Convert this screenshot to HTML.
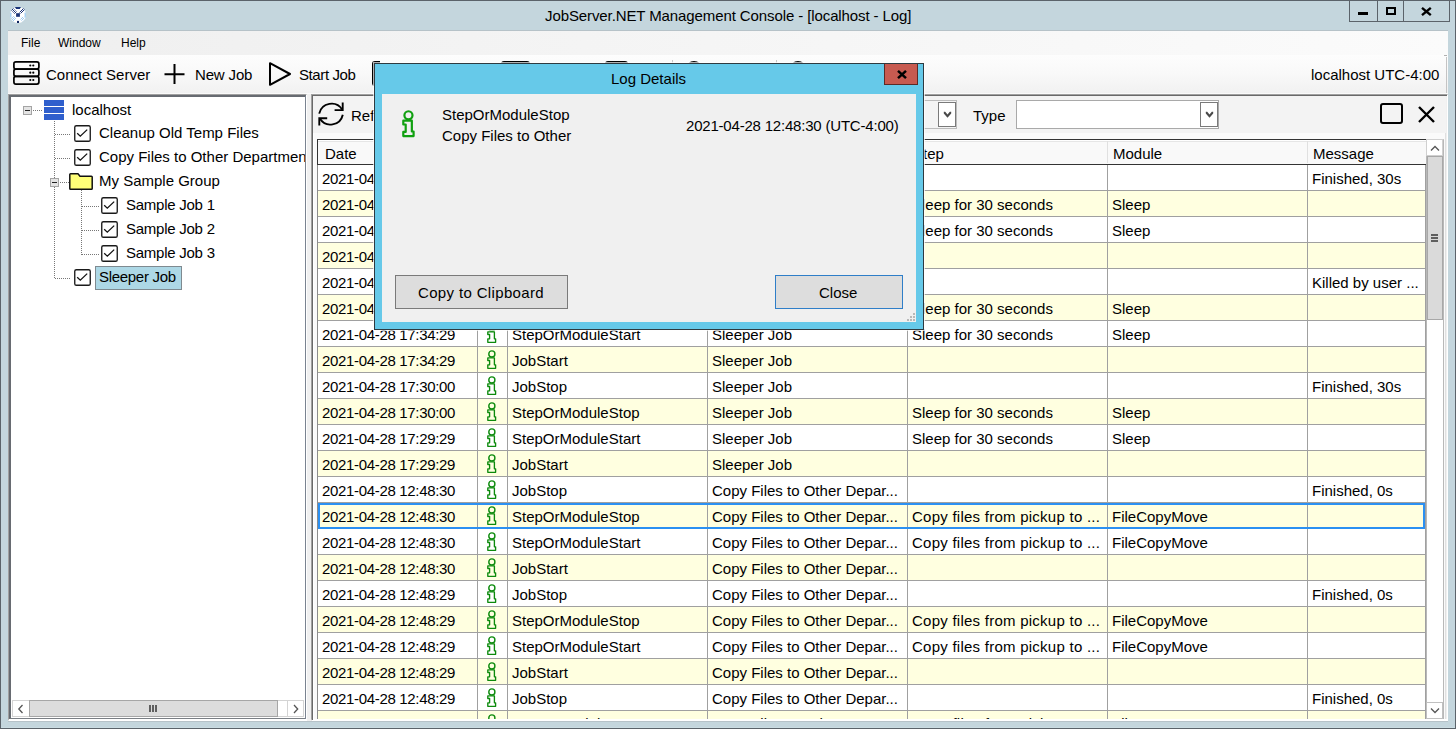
<!DOCTYPE html><html><head><meta charset="utf-8"><style>
*{box-sizing:border-box;margin:0;padding:0}
html,body{width:1456px;height:729px;overflow:hidden}
body{position:relative;background:#c4d6dd;font-family:"Liberation Sans",sans-serif;font-size:15px;color:#000}
.a{position:absolute}
.t{position:absolute;white-space:nowrap;line-height:20px;color:#000}
.d{letter-spacing:-0.33px}
svg{position:absolute;overflow:visible}
</style></head><body>
<div class="a" style="left:0;top:0;width:1456px;height:729px;border:1px solid #5b636a"></div>
<div class="a" style="left:1px;top:727px;width:1454px;height:1px;background:#cadce2"></div>
<div class="a" style="left:8px;top:721px;width:1440px;height:1px;background:#b6c2c8"></div>
<svg style="left:9px;top:6px" width="18" height="18" viewBox="0 0 18 18">
<defs><pattern id="ck" width="2" height="2" patternUnits="userSpaceOnUse"><rect x="0" y="0" width="1" height="1" fill="#1a3478"/><rect x="1" y="1" width="1" height="1" fill="#1a3478"/></pattern>
<pattern id="ckl" width="2" height="2" patternUnits="userSpaceOnUse"><rect x="0" y="0" width="1" height="1" fill="#9cc8ee"/><rect x="1" y="1" width="1" height="1" fill="#9cc8ee"/></pattern></defs>
<circle cx="9" cy="9" r="8.1" fill="#fff"/>
<path d="M1.2 6.5Q0.6 9 1.2 11.8L2.6 11.5Q2.2 9 2.6 6.8Z M16.8 6.5Q17.4 9 16.8 11.8L15.4 11.5Q15.8 9 15.4 6.8Z" fill="#a6d0f2"/>
<path d="M5.9 1H12L10.8 2.9H7.1Z" fill="#1a3478"/>
<path d="M2 4L4 1.9L8 5.9L5.9 7.9Z M16 4L14 1.9L10 5.9L12.1 7.9Z" fill="url(#ck)"/>
<path d="M2 12.5L4.5 10L7.2 12.7L4.6 15.4Z M16 12.5L13.5 10L10.8 12.7L13.4 15.4Z" fill="url(#ckl)"/>
<rect x="7.1" y="7.2" width="3.8" height="3.6" fill="#1a3478"/>
<rect x="8" y="14.9" width="2" height="2.1" fill="#0d2560"/>
</svg>
<div class="t" style="left:545px;top:6px;font-size:15px;letter-spacing:-0.1px">JobServer.NET Management Console - [localhost - Log]</div>
<div class="a" style="left:1349px;top:0;width:101px;height:22px;border:1px solid #5b636a;border-top:none"></div>
<div class="a" style="left:1377px;top:0;width:1px;height:22px;background:#5b636a"></div>
<div class="a" style="left:1403px;top:0;width:1px;height:22px;background:#5b636a"></div>
<div class="a" style="left:1358px;top:12px;width:10px;height:3px;background:#000"></div>
<div class="a" style="left:1386px;top:7px;width:10px;height:8px;border:2px solid #000;border-top-width:2px"></div>
<svg style="left:1421px;top:7px" width="11" height="9" viewBox="0 0 11 9"><path d="M1 0.8L9.8 8.2M9.8 0.8L1 8.2" stroke="#000" stroke-width="2.4"/></svg>
<div class="a" style="left:8px;top:30px;width:1440px;height:25px;background:linear-gradient(90deg,#efefef,#f4f4f4 40%,#fbfbfb);border-top:1px solid #b6c2c8"></div>
<div class="t" style="left:21px;top:33px;font-size:12px;">File</div>
<div class="t" style="left:58px;top:33px;font-size:12px;">Window</div>
<div class="t" style="left:121px;top:33px;font-size:12px;">Help</div>
<div class="a" style="left:8px;top:55px;width:1440px;height:39px;background:linear-gradient(#fdfdfd,#f9f9f9 45%,#f1f1f1)"></div>
<svg style="left:13px;top:61px" width="27" height="25" viewBox="0 0 27 25" fill="none" stroke="#000" stroke-width="1.7">
<rect x="0.9" y="0.9" width="25" height="7.2" rx="2"/><rect x="0.9" y="8.1" width="25" height="7.2" rx="2"/><rect x="0.9" y="15.3" width="25" height="7.8" rx="2"/>
<g fill="#000" stroke="none"><circle cx="17.3" cy="4.5" r="1.1"/><circle cx="20.3" cy="4.5" r="1.1"/><circle cx="17.3" cy="11.7" r="1.1"/><circle cx="20.3" cy="11.7" r="1.1"/><circle cx="17.3" cy="19" r="1.1"/><circle cx="20.3" cy="19" r="1.1"/></g>
</svg>
<div class="t" style="left:46px;top:65px;font-size:15px;">Connect Server</div>
<svg style="left:164px;top:64px" width="21" height="21" viewBox="0 0 21 21"><path d="M10.5 0v20M0.5 10.2h20" stroke="#000" stroke-width="2"/></svg>
<div class="t" style="left:195px;top:65px;font-size:15px;letter-spacing:-0.15px">New Job</div>
<svg style="left:268px;top:61px" width="24" height="26" viewBox="0 0 24 26"><path d="M2 2.2L22 13L2 23.8Z" fill="none" stroke="#000" stroke-width="2" stroke-linejoin="round"/></svg>
<div class="t" style="left:299px;top:65px;font-size:15px;letter-spacing:-0.4px">Start Job</div>
<div class="a" style="left:372px;top:61px;width:8px;height:25px;border:2px solid #000;border-right:none;border-radius:3px 0 0 3px"></div>
<div class="a" style="left:501px;top:61px;width:29px;height:25px;border:2px solid #000;border-radius:3px"></div>
<div class="a" style="left:605px;top:61px;width:23px;height:25px;border:2px solid #000;border-radius:3px"></div>
<div class="a" style="left:672px;top:60px;width:1px;height:30px;background:#c8c8c8"></div>
<div class="a" style="left:686px;top:61px;width:16px;height:16px;border:2px solid #000;border-radius:50%"></div>
<div class="a" style="left:776px;top:60px;width:1px;height:30px;background:#c8c8c8"></div>
<div class="a" style="left:790px;top:61px;width:16px;height:16px;border:2px solid #000;border-radius:50%"></div>
<div class="t" style="left:1311px;top:65px;font-size:15px;">localhost UTC-4:00</div>
<div class="a" style="left:1446px;top:57px;width:1px;height:36px;background:#c4c4c4"></div>
<div class="a" style="left:1444px;top:55px;width:3px;height:1px;background:#b0b0b0"></div>
<div class="a" style="left:8px;top:93px;width:1440px;height:628px;background:#f0f0f0;border-top:1px solid #fafafa"></div>
<div class="a" style="left:8px;top:94px;width:299px;height:627px;border-top:1px solid #a0a0a0;border-left:1px solid #a0a0a0;border-right:1px solid #fff;border-bottom:2px solid #fff"></div>
<div class="a" style="left:9px;top:95px;width:297px;height:624px;background:#fff;border:2px solid #676b71;border-right:1px solid #7a8390;border-bottom:1px solid #7a7f85"></div>
<div class="a" style="left:23px;top:106px;width:9px;height:9px;background:#e4e4e4;border:1px solid #a4a4a4"></div>
<div class="a" style="left:25px;top:110px;width:5px;height:1px;background:#222"></div>
<div class="a" style="left:33px;top:110px;width:10px;height:1px;background:repeating-linear-gradient(90deg,#777 0 1px,transparent 1px 2px)"></div>
<div class="a" style="left:44px;top:100px;width:20px;height:6px;background:#2f5fcd"></div>
<div class="a" style="left:44px;top:107px;width:20px;height:6px;background:#2f5fcd"></div>
<div class="a" style="left:44px;top:114px;width:20px;height:6px;background:#2f5fcd"></div>
<div class="t" style="left:72px;top:100px;font-size:15px;">localhost</div>
<div class="a" style="left:54px;top:121px;width:1px;height:158px;background:repeating-linear-gradient(180deg,#777 0 1px,transparent 1px 2px)"></div>
<div class="a" style="left:55px;top:134px;width:15px;height:1px;background:repeating-linear-gradient(90deg,#777 0 1px,transparent 1px 2px)"></div>
<svg style="left:74px;top:125px" width="17" height="17" viewBox="0 0 17 17"><rect x="0.75" y="0.75" width="15.5" height="15.5" rx="1.6" fill="#fff" stroke="#1a1a1a" stroke-width="1.35"/><path d="M3.2 8.2L6.3 11.2L13.2 4.6" fill="none" stroke="#111" stroke-width="1.3"/></svg>
<div class="t" style="left:99px;top:123px;font-size:15px;">Cleanup Old Temp Files</div>
<div class="a" style="left:55px;top:158px;width:15px;height:1px;background:repeating-linear-gradient(90deg,#777 0 1px,transparent 1px 2px)"></div>
<svg style="left:74px;top:149px" width="17" height="17" viewBox="0 0 17 17"><rect x="0.75" y="0.75" width="15.5" height="15.5" rx="1.6" fill="#fff" stroke="#1a1a1a" stroke-width="1.35"/><path d="M3.2 8.2L6.3 11.2L13.2 4.6" fill="none" stroke="#111" stroke-width="1.3"/></svg>
<div class="t" style="left:99px;top:147px;font-size:15px;width:206px;overflow:hidden">Copy Files to Other Departments</div>
<div class="a" style="left:50px;top:178px;width:9px;height:9px;background:#e4e4e4;border:1px solid #a4a4a4"></div>
<div class="a" style="left:52px;top:182px;width:5px;height:1px;background:#222"></div>
<div class="a" style="left:60px;top:182px;width:10px;height:1px;background:repeating-linear-gradient(90deg,#777 0 1px,transparent 1px 2px)"></div>
<svg style="left:69px;top:173px" width="24" height="17" viewBox="0 0 24 17"><path d="M0.8 1.6Q0.8 0.8 1.6 0.8H9L11 3.2H22.4Q23.2 3.2 23.2 4V15.4Q23.2 16.2 22.4 16.2H1.6Q0.8 16.2 0.8 15.4Z" fill="#ffff78" stroke="#111" stroke-width="1.5" stroke-linejoin="round"/></svg>
<div class="t" style="left:99px;top:171px;font-size:15px;">My Sample Group</div>
<div class="a" style="left:81px;top:190px;width:1px;height:65px;background:repeating-linear-gradient(180deg,#777 0 1px,transparent 1px 2px)"></div>
<div class="a" style="left:82px;top:206px;width:18px;height:1px;background:repeating-linear-gradient(90deg,#777 0 1px,transparent 1px 2px)"></div>
<svg style="left:101px;top:197px" width="17" height="17" viewBox="0 0 17 17"><rect x="0.75" y="0.75" width="15.5" height="15.5" rx="1.6" fill="#fff" stroke="#1a1a1a" stroke-width="1.35"/><path d="M3.2 8.2L6.3 11.2L13.2 4.6" fill="none" stroke="#111" stroke-width="1.3"/></svg>
<div class="t" style="left:126px;top:195px;font-size:15px;letter-spacing:-0.25px">Sample Job 1</div>
<div class="a" style="left:82px;top:230px;width:18px;height:1px;background:repeating-linear-gradient(90deg,#777 0 1px,transparent 1px 2px)"></div>
<svg style="left:101px;top:221px" width="17" height="17" viewBox="0 0 17 17"><rect x="0.75" y="0.75" width="15.5" height="15.5" rx="1.6" fill="#fff" stroke="#1a1a1a" stroke-width="1.35"/><path d="M3.2 8.2L6.3 11.2L13.2 4.6" fill="none" stroke="#111" stroke-width="1.3"/></svg>
<div class="t" style="left:126px;top:219px;font-size:15px;letter-spacing:-0.25px">Sample Job 2</div>
<div class="a" style="left:82px;top:254px;width:18px;height:1px;background:repeating-linear-gradient(90deg,#777 0 1px,transparent 1px 2px)"></div>
<svg style="left:101px;top:245px" width="17" height="17" viewBox="0 0 17 17"><rect x="0.75" y="0.75" width="15.5" height="15.5" rx="1.6" fill="#fff" stroke="#1a1a1a" stroke-width="1.35"/><path d="M3.2 8.2L6.3 11.2L13.2 4.6" fill="none" stroke="#111" stroke-width="1.3"/></svg>
<div class="t" style="left:126px;top:243px;font-size:15px;letter-spacing:-0.25px">Sample Job 3</div>
<div class="a" style="left:55px;top:278px;width:15px;height:1px;background:repeating-linear-gradient(90deg,#777 0 1px,transparent 1px 2px)"></div>
<svg style="left:74px;top:269px" width="17" height="17" viewBox="0 0 17 17"><rect x="0.75" y="0.75" width="15.5" height="15.5" rx="1.6" fill="#fff" stroke="#1a1a1a" stroke-width="1.35"/><path d="M3.2 8.2L6.3 11.2L13.2 4.6" fill="none" stroke="#111" stroke-width="1.3"/></svg>
<div class="a" style="left:95px;top:266px;width:87px;height:24px;background:#add8e6;border:1px solid #7f8a90"></div>
<div class="t" style="left:99px;top:267px;font-size:15px;letter-spacing:-0.3px">Sleeper Job</div>
<div class="a" style="left:305px;top:96px;width:1px;height:623px;background:#7a8390"></div>
<div class="a" style="left:12px;top:700px;width:292px;height:17px;background:#fff;border:1px solid #d4d4d4"></div>
<div class="a" style="left:29px;top:700px;width:249px;height:17px;background:#dcdcdc;border:1px solid #a6a6a6"></div>
<div class="a" style="left:287px;top:700px;width:17px;height:17px;background:#fff;border:1px solid #d4d4d4"></div>
<svg style="left:17px;top:704px" width="8" height="10" viewBox="0 0 8 10"><path d="M5.5 1L1.8 5L5.5 9" fill="none" stroke="#555" stroke-width="1.3"/></svg>
<svg style="left:292px;top:704px" width="8" height="10" viewBox="0 0 8 10"><path d="M2 1L5.7 5L2 9" fill="none" stroke="#555" stroke-width="1.3"/></svg>
<div class="a" style="left:149px;top:705px;width:2px;height:7px;background:#5f5f5f"></div>
<div class="a" style="left:152px;top:705px;width:2px;height:7px;background:#5f5f5f"></div>
<div class="a" style="left:155px;top:705px;width:2px;height:7px;background:#5f5f5f"></div>
<div class="a" style="left:311px;top:94px;width:1137px;height:627px;border-top:1px solid #a0a0a0;border-left:1px solid #a0a0a0;border-right:1px solid #fff;border-bottom:2px solid #fff"></div>
<div class="a" style="left:312px;top:95px;width:1135px;height:625px;border-top:1px solid #696969;border-left:1px solid #696969"></div>
<div class="a" style="left:313px;top:96px;width:1133px;height:623px;background:#fafafa;border-left:1px solid #fff;border-top:1px solid #fff;border-right:1px solid #e0e0e0"></div>
<div class="a" style="left:313px;top:96px;width:1133px;height:37px;background:#f3f3f3"></div>
<svg style="left:314px;top:98px" width="34" height="32" viewBox="0 0 34 32" fill="none" stroke="#000" stroke-width="1.9">
<path d="M5.2 15.6A12.6 12.6 0 0 1 28.2 11.6"/><path d="M28.7 4.4V12.1H20.6"/>
<path d="M28.8 16.7A12.6 12.6 0 0 1 5.8 20.6"/><path d="M5.3 27.6V20.2H13.2"/></svg>
<div class="t" style="left:351px;top:106px;font-size:15px;">Refresh</div>
<div class="a" style="left:840px;top:100px;width:117px;height:29px;background:#f4f4f4;border:1px solid #bcbcbc"></div>
<div class="a" style="left:938px;top:102px;width:18px;height:25px;background:#fff;border:1px solid #7a7a7a"></div>
<svg style="left:943px;top:111px" width="9" height="7" viewBox="0 0 9 7"><path d="M0.8 0.8H2.2L4.5 3.6L6.8 0.8H8.2V2.4L4.5 6.8L0.8 2.4Z" fill="#4a4a4a"/></svg>
<div class="t" style="left:973px;top:106px;font-size:15px;">Type</div>
<div class="a" style="left:1016px;top:100px;width:203px;height:29px;background:#fff;border:1px solid #a9a9a9"></div>
<div class="a" style="left:1200px;top:102px;width:18px;height:25px;background:#fff;border:1px solid #7a7a7a"></div>
<svg style="left:1205px;top:111px" width="9" height="7" viewBox="0 0 9 7"><path d="M0.8 0.8H2.2L4.5 3.6L6.8 0.8H8.2V2.4L4.5 6.8L0.8 2.4Z" fill="#4a4a4a"/></svg>
<div class="a" style="left:1380px;top:103px;width:23px;height:21px;border:2px solid #000;border-radius:3px"></div>
<svg style="left:1418px;top:106px" width="17" height="17" viewBox="0 0 17 17"><path d="M1 1L16 16M16 1L1 16" stroke="#000" stroke-width="2.4"/></svg>
<div class="a" style="left:317px;top:139px;width:1109px;height:580px;background:#fff;border-left:1px solid #8c8c8c"></div>
<div class="a" style="left:317px;top:139px;width:1109px;height:26px;background:#f9f9f9;border:1px solid #333;border-width:1px 0 1px 1px"></div>
<div class="a" style="left:318px;top:140px;width:1108px;height:1px;background:#fff"></div>
<div class="a" style="left:318px;top:141px;width:1108px;height:1px;background:#e6e6e6"></div>
<div class="a" style="left:707px;top:141px;width:1px;height:22px;background:#e0e0e0"></div>
<div class="a" style="left:907px;top:141px;width:1px;height:22px;background:#e0e0e0"></div>
<div class="a" style="left:1107px;top:141px;width:1px;height:22px;background:#e0e0e0"></div>
<div class="a" style="left:1307px;top:141px;width:1px;height:22px;background:#e0e0e0"></div>
<div class="t" style="left:325px;top:144px;font-size:15px;">Date</div>
<div class="t" style="left:513px;top:144px;font-size:15px;">Type</div>
<div class="t" style="left:713px;top:144px;font-size:15px;">Job</div>
<div class="t" style="left:913px;top:144px;font-size:15px;">Step</div>
<div class="t" style="left:1113px;top:144px;font-size:15px;">Module</div>
<div class="t" style="left:1313px;top:144px;font-size:15px;">Message</div>
<div class="a" style="left:318px;top:165px;width:1108px;height:554px;overflow:hidden">
<div class="a" style="left:0;top:0px;width:1107px;height:26px;background:#fff;border-bottom:1px solid #a0a0a0"></div>
<div class="a" style="left:159px;top:0px;width:1px;height:26px;background:#a0a0a0"></div>
<div class="a" style="left:189px;top:0px;width:1px;height:26px;background:#a0a0a0"></div>
<div class="a" style="left:389px;top:0px;width:1px;height:26px;background:#a0a0a0"></div>
<div class="a" style="left:589px;top:0px;width:1px;height:26px;background:#a0a0a0"></div>
<div class="a" style="left:789px;top:0px;width:1px;height:26px;background:#a0a0a0"></div>
<div class="a" style="left:989px;top:0px;width:1px;height:26px;background:#a0a0a0"></div>
<div class="a" style="left:1107px;top:0px;width:1px;height:26px;background:#a0a0a0"></div>
<div class="t" style="left:4px;top:4px;letter-spacing:-0.33px">2021-04-28 17:35:00</div>
<svg style="left:169px;top:4px" width="12" height="21" viewBox="0 0 12 21"><circle cx="4.85" cy="2.95" r="3.05" fill="none" stroke="#0c8a0c" stroke-width="1.4"/><path d="M0.8 6.9H7.4V13.8H8.6V17.3H0.8V13.8H2.6V9.5H0.8Z" fill="none" stroke="#0c8a0c" stroke-width="1.35" stroke-linejoin="round"/></svg>
<div class="t" style="left:194px;top:4px;">JobStop</div>
<div class="t" style="left:394px;top:4px;">Sleeper Job</div>
<div class="t" style="left:594px;top:4px;"></div>
<div class="t" style="left:794px;top:4px;"></div>
<div class="t" style="left:994px;top:4px;">Finished, 30s</div>
<div class="a" style="left:0;top:26px;width:1107px;height:26px;background:#ffffe0;border-bottom:1px solid #a0a0a0"></div>
<div class="a" style="left:159px;top:26px;width:1px;height:26px;background:#a0a0a0"></div>
<div class="a" style="left:189px;top:26px;width:1px;height:26px;background:#a0a0a0"></div>
<div class="a" style="left:389px;top:26px;width:1px;height:26px;background:#a0a0a0"></div>
<div class="a" style="left:589px;top:26px;width:1px;height:26px;background:#a0a0a0"></div>
<div class="a" style="left:789px;top:26px;width:1px;height:26px;background:#a0a0a0"></div>
<div class="a" style="left:989px;top:26px;width:1px;height:26px;background:#a0a0a0"></div>
<div class="a" style="left:1107px;top:26px;width:1px;height:26px;background:#a0a0a0"></div>
<div class="t" style="left:4px;top:30px;letter-spacing:-0.33px">2021-04-28 17:35:00</div>
<svg style="left:169px;top:30px" width="12" height="21" viewBox="0 0 12 21"><circle cx="4.85" cy="2.95" r="3.05" fill="none" stroke="#0c8a0c" stroke-width="1.4"/><path d="M0.8 6.9H7.4V13.8H8.6V17.3H0.8V13.8H2.6V9.5H0.8Z" fill="none" stroke="#0c8a0c" stroke-width="1.35" stroke-linejoin="round"/></svg>
<div class="t" style="left:194px;top:30px;">StepOrModuleStop</div>
<div class="t" style="left:394px;top:30px;">Sleeper Job</div>
<div class="t" style="left:594px;top:30px;">Sleep for 30 seconds</div>
<div class="t" style="left:794px;top:30px;">Sleep</div>
<div class="t" style="left:994px;top:30px;"></div>
<div class="a" style="left:0;top:52px;width:1107px;height:26px;background:#fff;border-bottom:1px solid #a0a0a0"></div>
<div class="a" style="left:159px;top:52px;width:1px;height:26px;background:#a0a0a0"></div>
<div class="a" style="left:189px;top:52px;width:1px;height:26px;background:#a0a0a0"></div>
<div class="a" style="left:389px;top:52px;width:1px;height:26px;background:#a0a0a0"></div>
<div class="a" style="left:589px;top:52px;width:1px;height:26px;background:#a0a0a0"></div>
<div class="a" style="left:789px;top:52px;width:1px;height:26px;background:#a0a0a0"></div>
<div class="a" style="left:989px;top:52px;width:1px;height:26px;background:#a0a0a0"></div>
<div class="a" style="left:1107px;top:52px;width:1px;height:26px;background:#a0a0a0"></div>
<div class="t" style="left:4px;top:56px;letter-spacing:-0.33px">2021-04-28 17:34:30</div>
<svg style="left:169px;top:56px" width="12" height="21" viewBox="0 0 12 21"><circle cx="4.85" cy="2.95" r="3.05" fill="none" stroke="#0c8a0c" stroke-width="1.4"/><path d="M0.8 6.9H7.4V13.8H8.6V17.3H0.8V13.8H2.6V9.5H0.8Z" fill="none" stroke="#0c8a0c" stroke-width="1.35" stroke-linejoin="round"/></svg>
<div class="t" style="left:194px;top:56px;">StepOrModuleStart</div>
<div class="t" style="left:394px;top:56px;">Sleeper Job</div>
<div class="t" style="left:594px;top:56px;">Sleep for 30 seconds</div>
<div class="t" style="left:794px;top:56px;">Sleep</div>
<div class="t" style="left:994px;top:56px;"></div>
<div class="a" style="left:0;top:78px;width:1107px;height:26px;background:#ffffe0;border-bottom:1px solid #a0a0a0"></div>
<div class="a" style="left:159px;top:78px;width:1px;height:26px;background:#a0a0a0"></div>
<div class="a" style="left:189px;top:78px;width:1px;height:26px;background:#a0a0a0"></div>
<div class="a" style="left:389px;top:78px;width:1px;height:26px;background:#a0a0a0"></div>
<div class="a" style="left:589px;top:78px;width:1px;height:26px;background:#a0a0a0"></div>
<div class="a" style="left:789px;top:78px;width:1px;height:26px;background:#a0a0a0"></div>
<div class="a" style="left:989px;top:78px;width:1px;height:26px;background:#a0a0a0"></div>
<div class="a" style="left:1107px;top:78px;width:1px;height:26px;background:#a0a0a0"></div>
<div class="t" style="left:4px;top:82px;letter-spacing:-0.33px">2021-04-28 17:34:30</div>
<svg style="left:169px;top:82px" width="12" height="21" viewBox="0 0 12 21"><circle cx="4.85" cy="2.95" r="3.05" fill="none" stroke="#0c8a0c" stroke-width="1.4"/><path d="M0.8 6.9H7.4V13.8H8.6V17.3H0.8V13.8H2.6V9.5H0.8Z" fill="none" stroke="#0c8a0c" stroke-width="1.35" stroke-linejoin="round"/></svg>
<div class="t" style="left:194px;top:82px;">JobStart</div>
<div class="t" style="left:394px;top:82px;">Sleeper Job</div>
<div class="t" style="left:594px;top:82px;"></div>
<div class="t" style="left:794px;top:82px;"></div>
<div class="t" style="left:994px;top:82px;"></div>
<div class="a" style="left:0;top:104px;width:1107px;height:26px;background:#fff;border-bottom:1px solid #a0a0a0"></div>
<div class="a" style="left:159px;top:104px;width:1px;height:26px;background:#a0a0a0"></div>
<div class="a" style="left:189px;top:104px;width:1px;height:26px;background:#a0a0a0"></div>
<div class="a" style="left:389px;top:104px;width:1px;height:26px;background:#a0a0a0"></div>
<div class="a" style="left:589px;top:104px;width:1px;height:26px;background:#a0a0a0"></div>
<div class="a" style="left:789px;top:104px;width:1px;height:26px;background:#a0a0a0"></div>
<div class="a" style="left:989px;top:104px;width:1px;height:26px;background:#a0a0a0"></div>
<div class="a" style="left:1107px;top:104px;width:1px;height:26px;background:#a0a0a0"></div>
<div class="t" style="left:4px;top:108px;letter-spacing:-0.33px">2021-04-28 17:34:29</div>
<svg style="left:169px;top:108px" width="12" height="21" viewBox="0 0 12 21"><circle cx="4.85" cy="2.95" r="3.05" fill="none" stroke="#0c8a0c" stroke-width="1.4"/><path d="M0.8 6.9H7.4V13.8H8.6V17.3H0.8V13.8H2.6V9.5H0.8Z" fill="none" stroke="#0c8a0c" stroke-width="1.35" stroke-linejoin="round"/></svg>
<div class="t" style="left:194px;top:108px;">JobStop</div>
<div class="t" style="left:394px;top:108px;">Sleeper Job</div>
<div class="t" style="left:594px;top:108px;"></div>
<div class="t" style="left:794px;top:108px;"></div>
<div class="t" style="left:994px;top:108px;">Killed by user ...</div>
<div class="a" style="left:0;top:130px;width:1107px;height:26px;background:#ffffe0;border-bottom:1px solid #a0a0a0"></div>
<div class="a" style="left:159px;top:130px;width:1px;height:26px;background:#a0a0a0"></div>
<div class="a" style="left:189px;top:130px;width:1px;height:26px;background:#a0a0a0"></div>
<div class="a" style="left:389px;top:130px;width:1px;height:26px;background:#a0a0a0"></div>
<div class="a" style="left:589px;top:130px;width:1px;height:26px;background:#a0a0a0"></div>
<div class="a" style="left:789px;top:130px;width:1px;height:26px;background:#a0a0a0"></div>
<div class="a" style="left:989px;top:130px;width:1px;height:26px;background:#a0a0a0"></div>
<div class="a" style="left:1107px;top:130px;width:1px;height:26px;background:#a0a0a0"></div>
<div class="t" style="left:4px;top:134px;letter-spacing:-0.33px">2021-04-28 17:34:29</div>
<svg style="left:169px;top:134px" width="12" height="21" viewBox="0 0 12 21"><circle cx="4.85" cy="2.95" r="3.05" fill="none" stroke="#0c8a0c" stroke-width="1.4"/><path d="M0.8 6.9H7.4V13.8H8.6V17.3H0.8V13.8H2.6V9.5H0.8Z" fill="none" stroke="#0c8a0c" stroke-width="1.35" stroke-linejoin="round"/></svg>
<div class="t" style="left:194px;top:134px;">StepOrModuleStop</div>
<div class="t" style="left:394px;top:134px;">Sleeper Job</div>
<div class="t" style="left:594px;top:134px;">Sleep for 30 seconds</div>
<div class="t" style="left:794px;top:134px;">Sleep</div>
<div class="t" style="left:994px;top:134px;"></div>
<div class="a" style="left:0;top:156px;width:1107px;height:26px;background:#fff;border-bottom:1px solid #a0a0a0"></div>
<div class="a" style="left:159px;top:156px;width:1px;height:26px;background:#a0a0a0"></div>
<div class="a" style="left:189px;top:156px;width:1px;height:26px;background:#a0a0a0"></div>
<div class="a" style="left:389px;top:156px;width:1px;height:26px;background:#a0a0a0"></div>
<div class="a" style="left:589px;top:156px;width:1px;height:26px;background:#a0a0a0"></div>
<div class="a" style="left:789px;top:156px;width:1px;height:26px;background:#a0a0a0"></div>
<div class="a" style="left:989px;top:156px;width:1px;height:26px;background:#a0a0a0"></div>
<div class="a" style="left:1107px;top:156px;width:1px;height:26px;background:#a0a0a0"></div>
<div class="t" style="left:4px;top:160px;letter-spacing:-0.33px">2021-04-28 17:34:29</div>
<svg style="left:169px;top:160px" width="12" height="21" viewBox="0 0 12 21"><circle cx="4.85" cy="2.95" r="3.05" fill="none" stroke="#0c8a0c" stroke-width="1.4"/><path d="M0.8 6.9H7.4V13.8H8.6V17.3H0.8V13.8H2.6V9.5H0.8Z" fill="none" stroke="#0c8a0c" stroke-width="1.35" stroke-linejoin="round"/></svg>
<div class="t" style="left:194px;top:160px;">StepOrModuleStart</div>
<div class="t" style="left:394px;top:160px;">Sleeper Job</div>
<div class="t" style="left:594px;top:160px;">Sleep for 30 seconds</div>
<div class="t" style="left:794px;top:160px;">Sleep</div>
<div class="t" style="left:994px;top:160px;"></div>
<div class="a" style="left:0;top:182px;width:1107px;height:26px;background:#ffffe0;border-bottom:1px solid #a0a0a0"></div>
<div class="a" style="left:159px;top:182px;width:1px;height:26px;background:#a0a0a0"></div>
<div class="a" style="left:189px;top:182px;width:1px;height:26px;background:#a0a0a0"></div>
<div class="a" style="left:389px;top:182px;width:1px;height:26px;background:#a0a0a0"></div>
<div class="a" style="left:589px;top:182px;width:1px;height:26px;background:#a0a0a0"></div>
<div class="a" style="left:789px;top:182px;width:1px;height:26px;background:#a0a0a0"></div>
<div class="a" style="left:989px;top:182px;width:1px;height:26px;background:#a0a0a0"></div>
<div class="a" style="left:1107px;top:182px;width:1px;height:26px;background:#a0a0a0"></div>
<div class="t" style="left:4px;top:186px;letter-spacing:-0.33px">2021-04-28 17:34:29</div>
<svg style="left:169px;top:186px" width="12" height="21" viewBox="0 0 12 21"><circle cx="4.85" cy="2.95" r="3.05" fill="none" stroke="#0c8a0c" stroke-width="1.4"/><path d="M0.8 6.9H7.4V13.8H8.6V17.3H0.8V13.8H2.6V9.5H0.8Z" fill="none" stroke="#0c8a0c" stroke-width="1.35" stroke-linejoin="round"/></svg>
<div class="t" style="left:194px;top:186px;">JobStart</div>
<div class="t" style="left:394px;top:186px;">Sleeper Job</div>
<div class="t" style="left:594px;top:186px;"></div>
<div class="t" style="left:794px;top:186px;"></div>
<div class="t" style="left:994px;top:186px;"></div>
<div class="a" style="left:0;top:208px;width:1107px;height:26px;background:#fff;border-bottom:1px solid #a0a0a0"></div>
<div class="a" style="left:159px;top:208px;width:1px;height:26px;background:#a0a0a0"></div>
<div class="a" style="left:189px;top:208px;width:1px;height:26px;background:#a0a0a0"></div>
<div class="a" style="left:389px;top:208px;width:1px;height:26px;background:#a0a0a0"></div>
<div class="a" style="left:589px;top:208px;width:1px;height:26px;background:#a0a0a0"></div>
<div class="a" style="left:789px;top:208px;width:1px;height:26px;background:#a0a0a0"></div>
<div class="a" style="left:989px;top:208px;width:1px;height:26px;background:#a0a0a0"></div>
<div class="a" style="left:1107px;top:208px;width:1px;height:26px;background:#a0a0a0"></div>
<div class="t" style="left:4px;top:212px;letter-spacing:-0.33px">2021-04-28 17:30:00</div>
<svg style="left:169px;top:212px" width="12" height="21" viewBox="0 0 12 21"><circle cx="4.85" cy="2.95" r="3.05" fill="none" stroke="#0c8a0c" stroke-width="1.4"/><path d="M0.8 6.9H7.4V13.8H8.6V17.3H0.8V13.8H2.6V9.5H0.8Z" fill="none" stroke="#0c8a0c" stroke-width="1.35" stroke-linejoin="round"/></svg>
<div class="t" style="left:194px;top:212px;">JobStop</div>
<div class="t" style="left:394px;top:212px;">Sleeper Job</div>
<div class="t" style="left:594px;top:212px;"></div>
<div class="t" style="left:794px;top:212px;"></div>
<div class="t" style="left:994px;top:212px;">Finished, 30s</div>
<div class="a" style="left:0;top:234px;width:1107px;height:26px;background:#ffffe0;border-bottom:1px solid #a0a0a0"></div>
<div class="a" style="left:159px;top:234px;width:1px;height:26px;background:#a0a0a0"></div>
<div class="a" style="left:189px;top:234px;width:1px;height:26px;background:#a0a0a0"></div>
<div class="a" style="left:389px;top:234px;width:1px;height:26px;background:#a0a0a0"></div>
<div class="a" style="left:589px;top:234px;width:1px;height:26px;background:#a0a0a0"></div>
<div class="a" style="left:789px;top:234px;width:1px;height:26px;background:#a0a0a0"></div>
<div class="a" style="left:989px;top:234px;width:1px;height:26px;background:#a0a0a0"></div>
<div class="a" style="left:1107px;top:234px;width:1px;height:26px;background:#a0a0a0"></div>
<div class="t" style="left:4px;top:238px;letter-spacing:-0.33px">2021-04-28 17:30:00</div>
<svg style="left:169px;top:238px" width="12" height="21" viewBox="0 0 12 21"><circle cx="4.85" cy="2.95" r="3.05" fill="none" stroke="#0c8a0c" stroke-width="1.4"/><path d="M0.8 6.9H7.4V13.8H8.6V17.3H0.8V13.8H2.6V9.5H0.8Z" fill="none" stroke="#0c8a0c" stroke-width="1.35" stroke-linejoin="round"/></svg>
<div class="t" style="left:194px;top:238px;">StepOrModuleStop</div>
<div class="t" style="left:394px;top:238px;">Sleeper Job</div>
<div class="t" style="left:594px;top:238px;">Sleep for 30 seconds</div>
<div class="t" style="left:794px;top:238px;">Sleep</div>
<div class="t" style="left:994px;top:238px;"></div>
<div class="a" style="left:0;top:260px;width:1107px;height:26px;background:#fff;border-bottom:1px solid #a0a0a0"></div>
<div class="a" style="left:159px;top:260px;width:1px;height:26px;background:#a0a0a0"></div>
<div class="a" style="left:189px;top:260px;width:1px;height:26px;background:#a0a0a0"></div>
<div class="a" style="left:389px;top:260px;width:1px;height:26px;background:#a0a0a0"></div>
<div class="a" style="left:589px;top:260px;width:1px;height:26px;background:#a0a0a0"></div>
<div class="a" style="left:789px;top:260px;width:1px;height:26px;background:#a0a0a0"></div>
<div class="a" style="left:989px;top:260px;width:1px;height:26px;background:#a0a0a0"></div>
<div class="a" style="left:1107px;top:260px;width:1px;height:26px;background:#a0a0a0"></div>
<div class="t" style="left:4px;top:264px;letter-spacing:-0.33px">2021-04-28 17:29:29</div>
<svg style="left:169px;top:264px" width="12" height="21" viewBox="0 0 12 21"><circle cx="4.85" cy="2.95" r="3.05" fill="none" stroke="#0c8a0c" stroke-width="1.4"/><path d="M0.8 6.9H7.4V13.8H8.6V17.3H0.8V13.8H2.6V9.5H0.8Z" fill="none" stroke="#0c8a0c" stroke-width="1.35" stroke-linejoin="round"/></svg>
<div class="t" style="left:194px;top:264px;">StepOrModuleStart</div>
<div class="t" style="left:394px;top:264px;">Sleeper Job</div>
<div class="t" style="left:594px;top:264px;">Sleep for 30 seconds</div>
<div class="t" style="left:794px;top:264px;">Sleep</div>
<div class="t" style="left:994px;top:264px;"></div>
<div class="a" style="left:0;top:286px;width:1107px;height:26px;background:#ffffe0;border-bottom:1px solid #a0a0a0"></div>
<div class="a" style="left:159px;top:286px;width:1px;height:26px;background:#a0a0a0"></div>
<div class="a" style="left:189px;top:286px;width:1px;height:26px;background:#a0a0a0"></div>
<div class="a" style="left:389px;top:286px;width:1px;height:26px;background:#a0a0a0"></div>
<div class="a" style="left:589px;top:286px;width:1px;height:26px;background:#a0a0a0"></div>
<div class="a" style="left:789px;top:286px;width:1px;height:26px;background:#a0a0a0"></div>
<div class="a" style="left:989px;top:286px;width:1px;height:26px;background:#a0a0a0"></div>
<div class="a" style="left:1107px;top:286px;width:1px;height:26px;background:#a0a0a0"></div>
<div class="t" style="left:4px;top:290px;letter-spacing:-0.33px">2021-04-28 17:29:29</div>
<svg style="left:169px;top:290px" width="12" height="21" viewBox="0 0 12 21"><circle cx="4.85" cy="2.95" r="3.05" fill="none" stroke="#0c8a0c" stroke-width="1.4"/><path d="M0.8 6.9H7.4V13.8H8.6V17.3H0.8V13.8H2.6V9.5H0.8Z" fill="none" stroke="#0c8a0c" stroke-width="1.35" stroke-linejoin="round"/></svg>
<div class="t" style="left:194px;top:290px;">JobStart</div>
<div class="t" style="left:394px;top:290px;">Sleeper Job</div>
<div class="t" style="left:594px;top:290px;"></div>
<div class="t" style="left:794px;top:290px;"></div>
<div class="t" style="left:994px;top:290px;"></div>
<div class="a" style="left:0;top:312px;width:1107px;height:26px;background:#fff;border-bottom:1px solid #a0a0a0"></div>
<div class="a" style="left:159px;top:312px;width:1px;height:26px;background:#a0a0a0"></div>
<div class="a" style="left:189px;top:312px;width:1px;height:26px;background:#a0a0a0"></div>
<div class="a" style="left:389px;top:312px;width:1px;height:26px;background:#a0a0a0"></div>
<div class="a" style="left:589px;top:312px;width:1px;height:26px;background:#a0a0a0"></div>
<div class="a" style="left:789px;top:312px;width:1px;height:26px;background:#a0a0a0"></div>
<div class="a" style="left:989px;top:312px;width:1px;height:26px;background:#a0a0a0"></div>
<div class="a" style="left:1107px;top:312px;width:1px;height:26px;background:#a0a0a0"></div>
<div class="t" style="left:4px;top:316px;letter-spacing:-0.33px">2021-04-28 12:48:30</div>
<svg style="left:169px;top:316px" width="12" height="21" viewBox="0 0 12 21"><circle cx="4.85" cy="2.95" r="3.05" fill="none" stroke="#0c8a0c" stroke-width="1.4"/><path d="M0.8 6.9H7.4V13.8H8.6V17.3H0.8V13.8H2.6V9.5H0.8Z" fill="none" stroke="#0c8a0c" stroke-width="1.35" stroke-linejoin="round"/></svg>
<div class="t" style="left:194px;top:316px;">JobStop</div>
<div class="t" style="left:394px;top:316px;">Copy Files to Other Depar...</div>
<div class="t" style="left:594px;top:316px;"></div>
<div class="t" style="left:794px;top:316px;"></div>
<div class="t" style="left:994px;top:316px;">Finished, 0s</div>
<div class="a" style="left:0;top:338px;width:1107px;height:26px;background:#ffffe0;border-bottom:1px solid #a0a0a0"></div>
<div class="a" style="left:159px;top:338px;width:1px;height:26px;background:#a0a0a0"></div>
<div class="a" style="left:189px;top:338px;width:1px;height:26px;background:#a0a0a0"></div>
<div class="a" style="left:389px;top:338px;width:1px;height:26px;background:#a0a0a0"></div>
<div class="a" style="left:589px;top:338px;width:1px;height:26px;background:#a0a0a0"></div>
<div class="a" style="left:789px;top:338px;width:1px;height:26px;background:#a0a0a0"></div>
<div class="a" style="left:989px;top:338px;width:1px;height:26px;background:#a0a0a0"></div>
<div class="a" style="left:1107px;top:338px;width:1px;height:26px;background:#a0a0a0"></div>
<div class="t" style="left:4px;top:342px;letter-spacing:-0.33px">2021-04-28 12:48:30</div>
<svg style="left:169px;top:342px" width="12" height="21" viewBox="0 0 12 21"><circle cx="4.85" cy="2.95" r="3.05" fill="none" stroke="#0c8a0c" stroke-width="1.4"/><path d="M0.8 6.9H7.4V13.8H8.6V17.3H0.8V13.8H2.6V9.5H0.8Z" fill="none" stroke="#0c8a0c" stroke-width="1.35" stroke-linejoin="round"/></svg>
<div class="t" style="left:194px;top:342px;">StepOrModuleStop</div>
<div class="t" style="left:394px;top:342px;">Copy Files to Other Depar...</div>
<div class="t" style="left:594px;top:342px;letter-spacing:0.25px">Copy files from pickup to ...</div>
<div class="t" style="left:794px;top:342px;">FileCopyMove</div>
<div class="t" style="left:994px;top:342px;"></div>
<div class="a" style="left:0;top:338px;width:1107px;height:26px;border:2px solid #2b90f2;border-width:2px 2px 2px 2px"></div>
<div class="a" style="left:0;top:364px;width:1107px;height:26px;background:#fff;border-bottom:1px solid #a0a0a0"></div>
<div class="a" style="left:159px;top:364px;width:1px;height:26px;background:#a0a0a0"></div>
<div class="a" style="left:189px;top:364px;width:1px;height:26px;background:#a0a0a0"></div>
<div class="a" style="left:389px;top:364px;width:1px;height:26px;background:#a0a0a0"></div>
<div class="a" style="left:589px;top:364px;width:1px;height:26px;background:#a0a0a0"></div>
<div class="a" style="left:789px;top:364px;width:1px;height:26px;background:#a0a0a0"></div>
<div class="a" style="left:989px;top:364px;width:1px;height:26px;background:#a0a0a0"></div>
<div class="a" style="left:1107px;top:364px;width:1px;height:26px;background:#a0a0a0"></div>
<div class="t" style="left:4px;top:368px;letter-spacing:-0.33px">2021-04-28 12:48:30</div>
<svg style="left:169px;top:368px" width="12" height="21" viewBox="0 0 12 21"><circle cx="4.85" cy="2.95" r="3.05" fill="none" stroke="#0c8a0c" stroke-width="1.4"/><path d="M0.8 6.9H7.4V13.8H8.6V17.3H0.8V13.8H2.6V9.5H0.8Z" fill="none" stroke="#0c8a0c" stroke-width="1.35" stroke-linejoin="round"/></svg>
<div class="t" style="left:194px;top:368px;">StepOrModuleStart</div>
<div class="t" style="left:394px;top:368px;">Copy Files to Other Depar...</div>
<div class="t" style="left:594px;top:368px;letter-spacing:0.25px">Copy files from pickup to ...</div>
<div class="t" style="left:794px;top:368px;">FileCopyMove</div>
<div class="t" style="left:994px;top:368px;"></div>
<div class="a" style="left:0;top:390px;width:1107px;height:26px;background:#ffffe0;border-bottom:1px solid #a0a0a0"></div>
<div class="a" style="left:159px;top:390px;width:1px;height:26px;background:#a0a0a0"></div>
<div class="a" style="left:189px;top:390px;width:1px;height:26px;background:#a0a0a0"></div>
<div class="a" style="left:389px;top:390px;width:1px;height:26px;background:#a0a0a0"></div>
<div class="a" style="left:589px;top:390px;width:1px;height:26px;background:#a0a0a0"></div>
<div class="a" style="left:789px;top:390px;width:1px;height:26px;background:#a0a0a0"></div>
<div class="a" style="left:989px;top:390px;width:1px;height:26px;background:#a0a0a0"></div>
<div class="a" style="left:1107px;top:390px;width:1px;height:26px;background:#a0a0a0"></div>
<div class="t" style="left:4px;top:394px;letter-spacing:-0.33px">2021-04-28 12:48:30</div>
<svg style="left:169px;top:394px" width="12" height="21" viewBox="0 0 12 21"><circle cx="4.85" cy="2.95" r="3.05" fill="none" stroke="#0c8a0c" stroke-width="1.4"/><path d="M0.8 6.9H7.4V13.8H8.6V17.3H0.8V13.8H2.6V9.5H0.8Z" fill="none" stroke="#0c8a0c" stroke-width="1.35" stroke-linejoin="round"/></svg>
<div class="t" style="left:194px;top:394px;">JobStart</div>
<div class="t" style="left:394px;top:394px;">Copy Files to Other Depar...</div>
<div class="t" style="left:594px;top:394px;"></div>
<div class="t" style="left:794px;top:394px;"></div>
<div class="t" style="left:994px;top:394px;"></div>
<div class="a" style="left:0;top:416px;width:1107px;height:26px;background:#fff;border-bottom:1px solid #a0a0a0"></div>
<div class="a" style="left:159px;top:416px;width:1px;height:26px;background:#a0a0a0"></div>
<div class="a" style="left:189px;top:416px;width:1px;height:26px;background:#a0a0a0"></div>
<div class="a" style="left:389px;top:416px;width:1px;height:26px;background:#a0a0a0"></div>
<div class="a" style="left:589px;top:416px;width:1px;height:26px;background:#a0a0a0"></div>
<div class="a" style="left:789px;top:416px;width:1px;height:26px;background:#a0a0a0"></div>
<div class="a" style="left:989px;top:416px;width:1px;height:26px;background:#a0a0a0"></div>
<div class="a" style="left:1107px;top:416px;width:1px;height:26px;background:#a0a0a0"></div>
<div class="t" style="left:4px;top:420px;letter-spacing:-0.33px">2021-04-28 12:48:29</div>
<svg style="left:169px;top:420px" width="12" height="21" viewBox="0 0 12 21"><circle cx="4.85" cy="2.95" r="3.05" fill="none" stroke="#0c8a0c" stroke-width="1.4"/><path d="M0.8 6.9H7.4V13.8H8.6V17.3H0.8V13.8H2.6V9.5H0.8Z" fill="none" stroke="#0c8a0c" stroke-width="1.35" stroke-linejoin="round"/></svg>
<div class="t" style="left:194px;top:420px;">JobStop</div>
<div class="t" style="left:394px;top:420px;">Copy Files to Other Depar...</div>
<div class="t" style="left:594px;top:420px;"></div>
<div class="t" style="left:794px;top:420px;"></div>
<div class="t" style="left:994px;top:420px;">Finished, 0s</div>
<div class="a" style="left:0;top:442px;width:1107px;height:26px;background:#ffffe0;border-bottom:1px solid #a0a0a0"></div>
<div class="a" style="left:159px;top:442px;width:1px;height:26px;background:#a0a0a0"></div>
<div class="a" style="left:189px;top:442px;width:1px;height:26px;background:#a0a0a0"></div>
<div class="a" style="left:389px;top:442px;width:1px;height:26px;background:#a0a0a0"></div>
<div class="a" style="left:589px;top:442px;width:1px;height:26px;background:#a0a0a0"></div>
<div class="a" style="left:789px;top:442px;width:1px;height:26px;background:#a0a0a0"></div>
<div class="a" style="left:989px;top:442px;width:1px;height:26px;background:#a0a0a0"></div>
<div class="a" style="left:1107px;top:442px;width:1px;height:26px;background:#a0a0a0"></div>
<div class="t" style="left:4px;top:446px;letter-spacing:-0.33px">2021-04-28 12:48:29</div>
<svg style="left:169px;top:446px" width="12" height="21" viewBox="0 0 12 21"><circle cx="4.85" cy="2.95" r="3.05" fill="none" stroke="#0c8a0c" stroke-width="1.4"/><path d="M0.8 6.9H7.4V13.8H8.6V17.3H0.8V13.8H2.6V9.5H0.8Z" fill="none" stroke="#0c8a0c" stroke-width="1.35" stroke-linejoin="round"/></svg>
<div class="t" style="left:194px;top:446px;">StepOrModuleStop</div>
<div class="t" style="left:394px;top:446px;">Copy Files to Other Depar...</div>
<div class="t" style="left:594px;top:446px;letter-spacing:0.25px">Copy files from pickup to ...</div>
<div class="t" style="left:794px;top:446px;">FileCopyMove</div>
<div class="t" style="left:994px;top:446px;"></div>
<div class="a" style="left:0;top:468px;width:1107px;height:26px;background:#fff;border-bottom:1px solid #a0a0a0"></div>
<div class="a" style="left:159px;top:468px;width:1px;height:26px;background:#a0a0a0"></div>
<div class="a" style="left:189px;top:468px;width:1px;height:26px;background:#a0a0a0"></div>
<div class="a" style="left:389px;top:468px;width:1px;height:26px;background:#a0a0a0"></div>
<div class="a" style="left:589px;top:468px;width:1px;height:26px;background:#a0a0a0"></div>
<div class="a" style="left:789px;top:468px;width:1px;height:26px;background:#a0a0a0"></div>
<div class="a" style="left:989px;top:468px;width:1px;height:26px;background:#a0a0a0"></div>
<div class="a" style="left:1107px;top:468px;width:1px;height:26px;background:#a0a0a0"></div>
<div class="t" style="left:4px;top:472px;letter-spacing:-0.33px">2021-04-28 12:48:29</div>
<svg style="left:169px;top:472px" width="12" height="21" viewBox="0 0 12 21"><circle cx="4.85" cy="2.95" r="3.05" fill="none" stroke="#0c8a0c" stroke-width="1.4"/><path d="M0.8 6.9H7.4V13.8H8.6V17.3H0.8V13.8H2.6V9.5H0.8Z" fill="none" stroke="#0c8a0c" stroke-width="1.35" stroke-linejoin="round"/></svg>
<div class="t" style="left:194px;top:472px;">StepOrModuleStart</div>
<div class="t" style="left:394px;top:472px;">Copy Files to Other Depar...</div>
<div class="t" style="left:594px;top:472px;letter-spacing:0.25px">Copy files from pickup to ...</div>
<div class="t" style="left:794px;top:472px;">FileCopyMove</div>
<div class="t" style="left:994px;top:472px;"></div>
<div class="a" style="left:0;top:494px;width:1107px;height:26px;background:#ffffe0;border-bottom:1px solid #a0a0a0"></div>
<div class="a" style="left:159px;top:494px;width:1px;height:26px;background:#a0a0a0"></div>
<div class="a" style="left:189px;top:494px;width:1px;height:26px;background:#a0a0a0"></div>
<div class="a" style="left:389px;top:494px;width:1px;height:26px;background:#a0a0a0"></div>
<div class="a" style="left:589px;top:494px;width:1px;height:26px;background:#a0a0a0"></div>
<div class="a" style="left:789px;top:494px;width:1px;height:26px;background:#a0a0a0"></div>
<div class="a" style="left:989px;top:494px;width:1px;height:26px;background:#a0a0a0"></div>
<div class="a" style="left:1107px;top:494px;width:1px;height:26px;background:#a0a0a0"></div>
<div class="t" style="left:4px;top:498px;letter-spacing:-0.33px">2021-04-28 12:48:29</div>
<svg style="left:169px;top:498px" width="12" height="21" viewBox="0 0 12 21"><circle cx="4.85" cy="2.95" r="3.05" fill="none" stroke="#0c8a0c" stroke-width="1.4"/><path d="M0.8 6.9H7.4V13.8H8.6V17.3H0.8V13.8H2.6V9.5H0.8Z" fill="none" stroke="#0c8a0c" stroke-width="1.35" stroke-linejoin="round"/></svg>
<div class="t" style="left:194px;top:498px;">JobStart</div>
<div class="t" style="left:394px;top:498px;">Copy Files to Other Depar...</div>
<div class="t" style="left:594px;top:498px;"></div>
<div class="t" style="left:794px;top:498px;"></div>
<div class="t" style="left:994px;top:498px;"></div>
<div class="a" style="left:0;top:520px;width:1107px;height:26px;background:#fff;border-bottom:1px solid #a0a0a0"></div>
<div class="a" style="left:159px;top:520px;width:1px;height:26px;background:#a0a0a0"></div>
<div class="a" style="left:189px;top:520px;width:1px;height:26px;background:#a0a0a0"></div>
<div class="a" style="left:389px;top:520px;width:1px;height:26px;background:#a0a0a0"></div>
<div class="a" style="left:589px;top:520px;width:1px;height:26px;background:#a0a0a0"></div>
<div class="a" style="left:789px;top:520px;width:1px;height:26px;background:#a0a0a0"></div>
<div class="a" style="left:989px;top:520px;width:1px;height:26px;background:#a0a0a0"></div>
<div class="a" style="left:1107px;top:520px;width:1px;height:26px;background:#a0a0a0"></div>
<div class="t" style="left:4px;top:524px;letter-spacing:-0.33px">2021-04-28 12:48:29</div>
<svg style="left:169px;top:524px" width="12" height="21" viewBox="0 0 12 21"><circle cx="4.85" cy="2.95" r="3.05" fill="none" stroke="#0c8a0c" stroke-width="1.4"/><path d="M0.8 6.9H7.4V13.8H8.6V17.3H0.8V13.8H2.6V9.5H0.8Z" fill="none" stroke="#0c8a0c" stroke-width="1.35" stroke-linejoin="round"/></svg>
<div class="t" style="left:194px;top:524px;">JobStop</div>
<div class="t" style="left:394px;top:524px;">Copy Files to Other Depar...</div>
<div class="t" style="left:594px;top:524px;"></div>
<div class="t" style="left:794px;top:524px;"></div>
<div class="t" style="left:994px;top:524px;">Finished, 0s</div>
<div class="a" style="left:0;top:546px;width:1107px;height:26px;background:#ffffe0;border-bottom:1px solid #a0a0a0"></div>
<div class="a" style="left:159px;top:546px;width:1px;height:26px;background:#a0a0a0"></div>
<div class="a" style="left:189px;top:546px;width:1px;height:26px;background:#a0a0a0"></div>
<div class="a" style="left:389px;top:546px;width:1px;height:26px;background:#a0a0a0"></div>
<div class="a" style="left:589px;top:546px;width:1px;height:26px;background:#a0a0a0"></div>
<div class="a" style="left:789px;top:546px;width:1px;height:26px;background:#a0a0a0"></div>
<div class="a" style="left:989px;top:546px;width:1px;height:26px;background:#a0a0a0"></div>
<div class="a" style="left:1107px;top:546px;width:1px;height:26px;background:#a0a0a0"></div>
<div class="t" style="left:4px;top:549px;letter-spacing:-0.33px">2021-04-28 12:48:29</div>
<svg style="left:169px;top:550px" width="12" height="21" viewBox="0 0 12 21"><circle cx="4.85" cy="2.95" r="3.05" fill="none" stroke="#0c8a0c" stroke-width="1.4"/><path d="M0.8 6.9H7.4V13.8H8.6V17.3H0.8V13.8H2.6V9.5H0.8Z" fill="none" stroke="#0c8a0c" stroke-width="1.35" stroke-linejoin="round"/></svg>
<div class="t" style="left:194px;top:549px;">StepOrModuleStop</div>
<div class="t" style="left:394px;top:549px;">Copy Files to Other Depar...</div>
<div class="t" style="left:594px;top:549px;letter-spacing:0.25px">Copy files from pickup to ...</div>
<div class="t" style="left:794px;top:549px;">FileCopyMove</div>
<div class="t" style="left:994px;top:549px;"></div>
</div>
<div class="a" style="left:1426px;top:139px;width:18px;height:580px;background:#fff;border:1px solid #b8b8b8;border-top-color:#d0d0d0"></div>
<div class="a" style="left:1427px;top:156px;width:16px;height:164px;background:#dadada;border:1px solid #a8a8a8"></div>
<div class="a" style="left:1431px;top:234px;width:7px;height:2px;background:#5f5f5f"></div>
<div class="a" style="left:1431px;top:237px;width:7px;height:2px;background:#5f5f5f"></div>
<div class="a" style="left:1431px;top:240px;width:7px;height:2px;background:#5f5f5f"></div>
<div class="a" style="left:1426px;top:139px;width:17px;height:17px;border:1px solid #d0d0d0;background:#fff"></div>
<div class="a" style="left:1426px;top:702px;width:17px;height:17px;border:1px solid #c0c0c0;background:#fff"></div>
<svg style="left:1430px;top:145px" width="10" height="7" viewBox="0 0 10 7"><path d="M1 5.5L5 1.5L9 5.5" fill="none" stroke="#555" stroke-width="1.3"/></svg>
<svg style="left:1430px;top:707px" width="10" height="7" viewBox="0 0 10 7"><path d="M1 1.5L5 5.5L9 1.5" fill="none" stroke="#555" stroke-width="1.3"/></svg>
<div class="a" style="left:373px;top:62px;width:552px;height:269px;border:1px solid rgba(255,255,255,0.7)"></div>
<div class="a" style="left:374px;top:63px;width:550px;height:267px;background:#66c9e9;border:1px solid #2e3a40"></div>
<div class="a" style="left:382px;top:94px;width:534px;height:228px;background:#f0f0f0"></div>
<div class="t" style="left:611px;top:69px;font-size:15px;">Log Details</div>
<div class="a" style="left:884px;top:64px;width:34px;height:21px;background:#c75a50;border:1px solid #5d2a26;border-top:none"></div>
<svg style="left:897px;top:70px" width="10" height="9" viewBox="0 0 10 9"><path d="M1 0.8L9 8.2M9 0.8L1 8.2" stroke="#000" stroke-width="2.5"/></svg>
<svg style="left:400px;top:108px" width="16" height="31" viewBox="0 0 16 31"><circle cx="8.45" cy="7.3" r="4.05" fill="none" stroke="#10a010" stroke-width="2.2"/><path d="M3.3 12.7H11.85V23.5H13.6V28.1H3.3V23.9H5.7V16.5H3.3Z" fill="none" stroke="#10a010" stroke-width="2.2" stroke-linejoin="round"/></svg>
<div class="t" style="left:442px;top:105px;font-size:15px;">StepOrModuleStop</div>
<div class="t" style="left:442px;top:126px;font-size:15px;">Copy Files to Other</div>
<div class="t" style="left:686px;top:116px;font-size:15px;letter-spacing:-0.2px">2021-04-28 12:48:30 (UTC-4:00)</div>
<div class="a" style="left:395px;top:275px;width:173px;height:34px;background:#dddddd;border:1px solid #7a7a7a"></div>
<div class="t" style="left:418px;top:283px;font-size:15px;letter-spacing:0.35px">Copy to Clipboard</div>
<div class="a" style="left:775px;top:275px;width:128px;height:34px;background:#dddddd;border:1px solid #2f7ec8"></div>
<div class="t" style="left:819px;top:283px;font-size:15px;">Close</div>
<div class="a" style="left:913px;top:313px;width:2px;height:2px;background:#b8b8b8"></div>
<div class="a" style="left:910px;top:316px;width:2px;height:2px;background:#b8b8b8"></div>
<div class="a" style="left:913px;top:316px;width:2px;height:2px;background:#b8b8b8"></div>
<div class="a" style="left:907px;top:319px;width:2px;height:2px;background:#b8b8b8"></div>
<div class="a" style="left:910px;top:319px;width:2px;height:2px;background:#b8b8b8"></div>
<div class="a" style="left:913px;top:319px;width:2px;height:2px;background:#b8b8b8"></div>
</body></html>
